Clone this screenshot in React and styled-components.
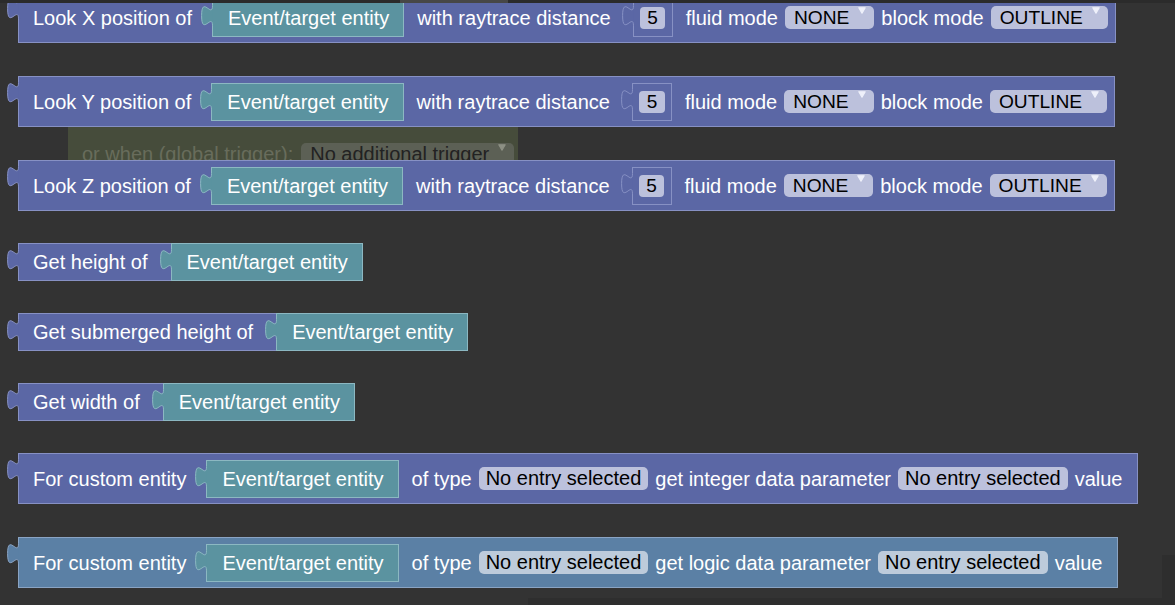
import React from 'react';
import styled, { createGlobalStyle, css } from 'styled-components';

const palette = {
  purple: { bg: '#5b67a5', line: '#8791c4', field: '#bcc1dc' },
  teal: { bg: '#5b93a0', line: '#8cb8c2', field: '#bdd4da' },
  blue: { bg: '#5b80a5', line: '#8aa4c4', field: '#bdcbdb' },
};

const GlobalStyle = createGlobalStyle`
  html, body {
    margin: 0;
    padding: 0;
    background: #333333;
  }
  body {
    font-family: "Liberation Sans", Arial, sans-serif;
  }
`;

const Workspace = styled.div`
  position: relative;
  width: 100vw;
  height: 100vh;
  overflow: hidden;
  background: #333333;
`;

const TopEdge = styled.div`
  position: absolute;
  top: 0;
  left: 0;
  right: 0;
  height: 3px;
  z-index: 3;
  background: linear-gradient(to right, #2b2b2b 0 400px, #474747 400px 508px, #2b2b2b 508px);
`;

const ScrollH = styled.div`
  position: absolute;
  left: 528px;
  right: 0;
  bottom: 0;
  height: 7px;
  background: #2e2e2e;
`;

const ScrollV = styled.div`
  position: absolute;
  right: 0;
  top: 555px;
  bottom: 0;
  width: 13px;
  background: #2e2e2e;
`;

const Column = styled.div`
  position: relative;
  z-index: 1;
  display: flex;
  flex-direction: column;
  padding-left: 18px;
`;

const Block = styled.div`
  position: relative;
  align-self: flex-start;
  display: flex;
  align-items: center;
  box-sizing: border-box;
  height: ${p => p.$h}px;
  margin-top: ${p => p.$mt}px;
  padding: 0 ${p => p.$pr}px 0 14px;
  background: ${p => palette[p.$tone].bg};
  border: 1px solid ${p => palette[p.$tone].line};
`;

const Label = styled.span`
  color: #ffffff;
  font-size: 20px;
  line-height: 20px;
  white-space: nowrap;
  margin-left: ${p => p.$ml || 0}px;
`;

const Value = styled.div`
  position: relative;
  display: flex;
  align-items: center;
  box-sizing: border-box;
  height: 38px;
  padding: 0 14px 0 15px;
  margin-left: ${p => p.$ml}px;
  background: ${palette.teal.bg};
  border: 1px solid ${palette.teal.line};
  ${p => p.$fill && css`
    align-self: stretch;
    height: auto;
    margin: -1px -1px -1px ${p.$ml}px;
  `}
`;

const Socket = styled.div`
  position: relative;
  box-sizing: border-box;
  width: 40px;
  height: 38px;
  margin-left: 22px;
  border: 1px solid ${palette.purple.line};
  display: flex;
  align-items: center;
  justify-content: center;
`;

const NumberPill = styled.span`
  display: flex;
  align-items: center;
  height: 22px;
  padding: 0 7.5px;
  border-radius: 4px;
  background: ${palette.purple.field};
  color: #000000;
  font-size: 19px;
`;

const Dropdown = styled.div`
  display: flex;
  align-items: center;
  box-sizing: border-box;
  height: 23px;
  margin-left: ${p => p.$ml ?? 7}px;
  padding: 0 ${p => (p.$arrow ? 8 : 7)}px 0 ${p => (p.$arrow ? 9 : 7)}px;
  border-radius: 5px;
  background: ${p => p.$bg};
  color: ${p => p.$ink || '#000000'};
  font-size: ${p => p.$size || 20}px;
  white-space: nowrap;
`;

const ArrowSvg = styled.svg`
  align-self: flex-start;
  margin-top: 1px;
  margin-left: 9px;
  width: 8px;
  height: 7px;
`;

const TabSvg = styled.svg`
  position: absolute;
  left: -12px;
  top: -1px;
  width: 14px;
  height: 30px;
`;

const Ghost = styled.div`
  position: absolute;
  left: 68px;
  top: 120px;
  width: 450px;
  height: 68px;
  box-sizing: border-box;
  padding-left: 14px;
  display: flex;
  align-items: center;
  background: #464c3b;
  z-index: 0;
`;

const GhostLabel = styled.span`
  color: #686c5c;
  font-size: 20px;
  white-space: nowrap;
`;

const curve = 'M11.5,6.5 c0,13.6 -10.9,-10.9 -10.9,10.2 s10.9,-3.4 10.9,10.2';

function Tab({ tone }) {
  const c = palette[tone];
  return (
    <TabSvg viewBox="0 0 14 30">
      <rect x="11" y="6.5" width="3" height="20.4" fill={c.bg} />
      <path d={`${curve} Z`} fill={c.bg} />
      <path d={curve} fill="none" stroke={c.line} strokeWidth="1" />
    </TabSvg>
  );
}

function Arrow({ color = '#eef0fa' }) {
  return (
    <ArrowSvg viewBox="0 0 8 7">
      <path d="M0.8,0.8 L7.2,0.8 L4,6.2 Z" fill={color} stroke={color} strokeWidth="1.2" strokeLinejoin="round" />
    </ArrowSvg>
  );
}

function Entity({ ml, fill }) {
  return (
    <Value $ml={ml} $fill={fill}>
      <Tab tone="teal" />
      <Label>Event/target entity</Label>
    </Value>
  );
}

function Select({ tone, text, arrow, size }) {
  return (
    <Dropdown $bg={palette[tone].field} $arrow={arrow} $size={size}>
      {text}
      {arrow && <Arrow />}
    </Dropdown>
  );
}

function LookBlock({ axis, mt }) {
  return (
    <Block $tone="purple" $h={51} $mt={mt} $pr={7}>
      <Tab tone="purple" />
      <Label>Look {axis} position of</Label>
      <Entity ml={20} />
      <Label $ml={13}>with raytrace distance</Label>
      <Socket>
        <Tab tone="purple" />
        <NumberPill>5</NumberPill>
      </Socket>
      <Label $ml={13}>fluid mode</Label>
      <Select tone="purple" text="NONE" size={19.2} arrow />
      <Label $ml={7}>block mode</Label>
      <Select tone="purple" text="OUTLINE" size={19.2} arrow />
    </Block>
  );
}

function GetBlock({ text, mt }) {
  return (
    <Block $tone="purple" $h={38} $mt={mt} $pr={0}>
      <Tab tone="purple" />
      <Label>{text}</Label>
      <Entity ml={23} fill />
    </Block>
  );
}

function CustomBlock({ tone, kind, mt }) {
  return (
    <Block $tone={tone} $h={51} $mt={mt} $pr={15}>
      <Tab tone={tone} />
      <Label>For custom entity</Label>
      <Entity ml={20} />
      <Label $ml={13}>of type</Label>
      <Select tone={tone} text="No entry selected" />
      <Label $ml={7}>get {kind} data parameter</Label>
      <Select tone={tone} text="No entry selected" />
      <Label $ml={7}>value</Label>
    </Block>
  );
}

export default function App() {
  return (
    <>
      <GlobalStyle />
      <Workspace>
        <Ghost>
          <GhostLabel>or when (global trigger):</GhostLabel>
          <Dropdown $bg="#5c6055" $ink="#222222" $size={20} $ml={8} $arrow>
            No additional trigger
            <Arrow color="#8d9084" />
          </Dropdown>
        </Ghost>
        <Column>
          <LookBlock axis="X" mt={-8} />
          <LookBlock axis="Y" mt={33} />
          <LookBlock axis="Z" mt={33} />
          <GetBlock text="Get height of" mt={32} />
          <GetBlock text="Get submerged height of" mt={32} />
          <GetBlock text="Get width of" mt={32} />
          <CustomBlock tone="purple" kind="integer" mt={32} />
          <CustomBlock tone="blue" kind="logic" mt={33} />
        </Column>
        <TopEdge />
        <ScrollH />
        <ScrollV />
      </Workspace>
    </>
  );
}
